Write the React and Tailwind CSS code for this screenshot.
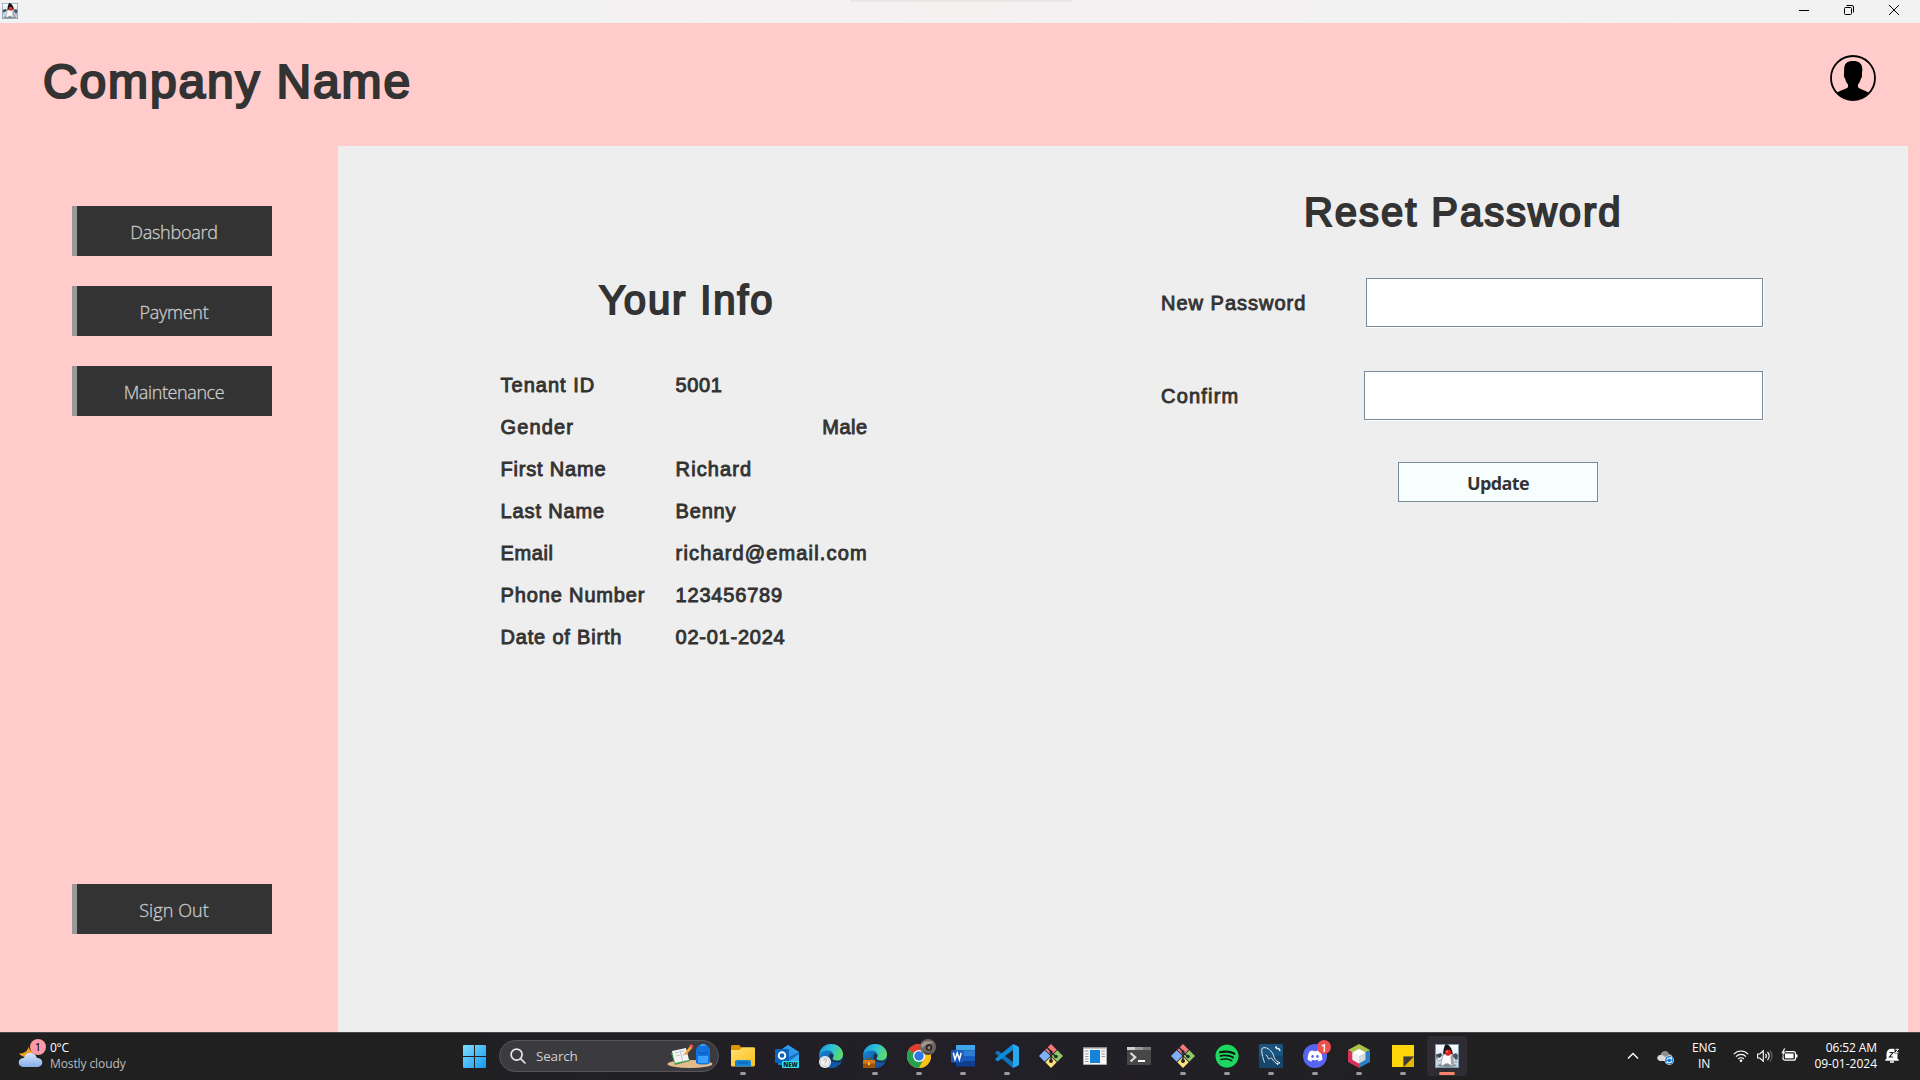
import React from "react";
import { FaDiscord, FaSpotify } from "react-icons/fa";

const ROUNDED = "font-['Liberation_Sans',sans-serif] text-[#333333]";

/* ---------- shared drawings ---------- */

function Duke({ className }) {
  return (
    <svg className={className} viewBox="0 0 24 24">
      <defs>
        <linearGradient id="dukeBg" x1="0" y1="0" x2="0" y2="1">
          <stop offset="0" stopColor="#ffffff" />
          <stop offset="1" stopColor="#b9d0e2" />
        </linearGradient>
      </defs>
      <rect x=".5" y=".5" width="23" height="23" fill="url(#dukeBg)" stroke="#8098ad" />
      <ellipse cx="12" cy="21.400" rx="9.500" ry="1.500" fill="#7d8890" />
      <path d="M1 10.500l5-1.500 1.500 3-1.500 3.500-4.500-1z" fill="#3d4a55" />
      <path d="M17 11l4-2 2 2-.5 4.500-4 .5z" fill="#48545f" />
      <path d="M2.500 12.500l2 1.500L9 9.500l-1 5-4 2.500-2-1.500zM16 11l4 3.500 1.500 4-2.500-.5-4-3z" fill="#eef1f4" stroke="#59636c" strokeWidth=".5" />
      <path d="M10 1c-1 2.500-2 6-1.800 10h9.600c0-4.500-2-8.500-5.300-10.500-1-.6-2-.4-2.500.5z" fill="#141517" />
      <path d="M8.500 10c-1 3.500-2.500 7-2.300 10.500.1 1.500 1.500 1.500 2.600.5 1.200-1.300 2.700-1.800 4.200-1.300 1.700.5 2.500 2.300 4.500 2 1.300-.3 1.500-4 .7-7.200-.3-1.700-.6-3-.9-4.500z" fill="#fafafa" stroke="#6c757d" strokeWidth=".5" />
      <path d="M15.500 11.500l1.800-.5c.8 3 1.300 6.500.8 10l-2-.6z" fill="#9aa2a9" />
      <circle cx="13" cy="8.600" r="3.100" fill="#e0201c" />
      <circle cx="12.200" cy="7.600" r=".9" fill="#ff8c84" />
    </svg>
  );
}

function Avatar() {
  return (
    <svg className="h-[46px] w-[46px]" viewBox="0 0 46 46">
      <defs>
        <clipPath id="avatarClip">
          <circle cx="23" cy="23" r="22" />
        </clipPath>
      </defs>
      <circle cx="23" cy="23" r="22" fill="none" stroke="#000" strokeWidth="1.800" />
      <path
        clipPath="url(#avatarClip)"
        d="M14.200 14c0-5.500 3-8 8.800-8s9.300 2.500 9.300 8c0 2-.2 3.300-.4 4.400.4 1.600.1 4.200-1 5.200-.5 2.600-1.500 4.400-2.900 5.900v2.800c2.500 2.200 6.500 2.600 10.500 5.300V46H7v-8.400c4-2.700 8-3.100 11-5.300v-2.800c-1.500-1.500-2.500-3.300-2.900-5.900-1.200-1-1.500-3.600-1-5.200-.2-1.100.1-2.400.1-4.400z"
        fill="#000"
      />
    </svg>
  );
}

/* ---------- taskbar icons ---------- */

function FolderIcon() {
  return (
    <svg className="h-6 w-6" viewBox="0 0 24 24">
      <defs>
        <linearGradient id="folder" x1="0" y1="0" x2="1" y2="1">
          <stop offset="0" stopColor="#ffdf70" />
          <stop offset="1" stopColor="#fbbf1c" />
        </linearGradient>
      </defs>
      <path d="M0 2.500C0 1.700.6 1 1.500 1H8l2.500 2.500V8H0z" fill="#d99605" />
      <path d="M0 6h8.500L11 3.200h11.500c.8 0 1.500.6 1.500 1.400V21c0 .9-.7 1.500-1.500 1.500h-21C.7 22.500 0 22 0 21z" fill="url(#folder)" />
      <path d="M4 22.500V18c0-1.200.8-2 2-2h12c1.200 0 2 .8 2 2v4.500z" fill="#1584d6" />
      <path d="M7.500 18.800h9" stroke="#0a5ea8" strokeWidth="1.300" strokeLinecap="round" />
    </svg>
  );
}

function OutlookIcon() {
  return (
    <span className="relative block h-6 w-6">
      <svg className="h-6 w-6" viewBox="0 0 24 24">
        <path d="M3 8l10-7 11 7v13H3z" fill="#1a7fd4" />
        <path d="M5 6.500L13 1l11 7-8 5-8-2z" fill="#2f9be6" />
        <path d="M14 13l10-5v13z" fill="#1b6cc0" />
        <path d="M24 10v11H9z" fill="#35aef0" />
        <rect y="5" width="14" height="14" rx="1" fill="#0a64bc" />
        <circle cx="7" cy="11.500" r="3.300" fill="none" stroke="#fff" strokeWidth="1.900" />
      </svg>
      <span className="absolute top-[17px] left-[7px] flex h-[7px] w-[17px] items-center justify-center rounded-[1px] bg-[#35e0ef] font-['Open_Sans',sans-serif] text-[6px] leading-none font-extrabold text-[#06222c]">
        NEW
      </span>
    </span>
  );
}

function EdgeIcon({ badge }) {
  return (
    <svg className="h-6 w-6" viewBox="0 0 24 24">
      <defs>
        <linearGradient id="edgeTop" x1="0" y1=".3" x2="1" y2=".6">
          <stop offset="0" stopColor="#1a9be0" />
          <stop offset=".5" stopColor="#2fc3d4" />
          <stop offset="1" stopColor="#62dd5c" />
        </linearGradient>
        <linearGradient id="edgeLow" x1="0" y1="0" x2="1" y2="1">
          <stop offset="0" stopColor="#1b8bd8" />
          <stop offset="1" stopColor="#0d4b97" />
        </linearGradient>
      </defs>
      <circle cx="12" cy="12" r="12" fill="url(#edgeLow)" />
      <path d="M.3 10C1.500 4 6.200 0 12 0c7.200 0 12 5 12 10.300 0 4-3 6.300-6.200 6.300-3 0-4.300-1.200-4.300-2.100 0-.8 1.100-1.200 1.100-3.200 0-2.800-2.700-4.800-6-4.800C4.500 6.500 1.500 8.500.3 10z" fill="url(#edgeTop)" />
      <path d="M9.500 12c-.8 5.500 3.800 8.900 12.700 6.300C20.500 21.500 17 24 12.500 24 8.500 22 6 17 9.500 12z" fill="#1257a5" />
      <path d="M10.500 10c-1.600 6 4 10.500 12.200 7.400l1.300-1.700c-1.500.8-3.500 1.300-6.200 1-3-.2-4.300-1.300-4.300-2.200 0-.8 1.100-1.200 1.100-3-.8-1.800-2.800-2.300-4.100-1.500z" fill="#221f28" opacity=".75" />
      {badge === "profile" ? (
        <g>
          <circle cx="6" cy="18" r="6" fill="#f1f1f1" />
          <circle cx="6" cy="18" r="4.600" fill="none" stroke="#bdbdbd" strokeWidth=".7" />
          <path d="M4.700 16.500c.2-2 3-1.800 2.700.1-.2 1-1.300 1-1.300 2.400M6 20.500v.8" fill="none" stroke="#999" strokeWidth=".9" />
        </g>
      ) : (
        <g>
          <path d="M4 16v-1.500h4V16" fill="none" stroke="#8a4b08" strokeWidth="1.200" />
          <rect y="16" width="12" height="8" rx=".8" fill="#d27a17" />
          <rect y="19.500" width="12" height="4.500" rx=".8" fill="#9b520b" />
          <rect x="5" y="18.500" width="2" height="2.500" fill="#ffc34d" />
        </g>
      )}
    </svg>
  );
}

function ChromeIcon() {
  return (
    <span className="relative block h-6 w-6">
      <svg className="h-6 w-6" viewBox="0 0 24 24">
        <circle cx="12" cy="12" r="12" fill="#fbc116" />
        <path d="M12 12L1.600 6A12 12 0 0 1 22.400 6z" fill="#e33b2e" />
        <path d="M12 12L1.600 6A12 12 0 0 0 12 24l5.200-9z" fill="#25a04b" />
        <path d="M12 6h10.400A12 12 0 0 1 12 24l5.200-9z" fill="#fbc116" />
        <circle cx="12" cy="12" r="6" fill="#fff" />
        <circle cx="12" cy="12" r="4.700" fill="#2f76e8" />
      </svg>
      <svg className="absolute -top-[5px] left-[13px] h-4 w-4" viewBox="0 0 16 16">
        <circle cx="8" cy="8" r="8" fill="#6f675f" />
        <path d="M1 6c4-5 10-4 13-2-4 0-8 1-12 5z" fill="#a19a91" />
        <circle cx="9" cy="8.500" r="3.200" fill="#26221f" />
        <path d="M7.500 8c1-1.500 3-1 3 .5s-1 2-1.500 2-2-1-1.500-2.500z" fill="#8f857c" />
        <path d="M2 11c3 3 8 4 11 1l-3 3.500H6z" fill="#4b443f" />
      </svg>
    </span>
  );
}

function WordIcon() {
  return (
    <svg className="h-6 w-6" viewBox="0 0 24 24">
      <rect x="5" y="1" width="19" height="5.500" fill="#41a5ee" />
      <rect x="5" y="6.500" width="19" height="5.500" fill="#2b7cd3" />
      <rect x="5" y="12" width="19" height="5.500" fill="#185abd" />
      <rect x="5" y="17.500" width="19" height="5" fill="#103f91" />
      <rect y="6" width="12.500" height="12.500" rx="1" fill="#1959bb" />
      <path d="M2.300 8.800l1.700 6.700 2.200-6.400 2.200 6.400 1.800-6.700" fill="none" stroke="#fff" strokeWidth="1.500" />
    </svg>
  );
}

function CodeIcon() {
  return (
    <svg className="h-6 w-6" viewBox="0 0 24 24">
      <path d="M.4 8.500L2 7c.4-.4 1-.4 1.500 0L18 18v6L.5 9.600c-.4-.3-.4-.8-.1-1.100z" fill="#0b74bd" />
      <path d="M.4 15.500L2 17c.4.400 1 .4 1.500 0L18 6V0L.5 14.400c-.4.300-.4.800-.1 1.100z" fill="#0d8ad8" />
      <path d="M18 0l5.200 2.400c.5.300.8.800.8 1.300v16.600c0 .5-.3 1-.8 1.300L18 24z" fill="#27a9f2" />
    </svg>
  );
}

function GitIcon() {
  return (
    <svg className="h-6 w-6" viewBox="0 0 24 24">
      <path d="M12 0l5.700 5.700L12 11.400 6.300 5.700z" fill="#f27a7a" />
      <path d="M0 12l5.700-5.700 5.700 5.700-5.700 5.700z" fill="#7fb0fa" />
      <path d="M24 12l-5.700-5.700-5.700 5.700 5.700 5.700z" fill="#8ccc66" />
      <path d="M12 24l5.700-5.700-5.700-5.700-5.700 5.700z" fill="#fbe27d" />
      <path d="M8 3.500l4 4v11M12 8.500l5 4" fill="none" stroke="#2b2730" strokeWidth="1.500" />
      <circle cx="12" cy="8" r="1.700" fill="#2b2730" />
      <circle cx="12" cy="17" r="2" fill="#2b2730" />
      <circle cx="17" cy="12.500" r="1.800" fill="#2b2730" />
    </svg>
  );
}

function WindowIcon() {
  return (
    <svg className="h-6 w-6" viewBox="0 0 24 24">
      <rect y="3" width="24" height="18" fill="#8c8c8c" />
      <rect x=".7" y="4.500" width="22.600" height="15.800" fill="#f7f7f7" />
      <rect x="7" y="6" width="10" height="13" fill="#1583d8" />
      <path d="M2 7h3.500M2 10h3.500M2 12.500h3.500M2 15h3.500M2 17.500h3.500M18.500 7H22M18.500 10H22M18.500 12.500H22" stroke="#8a8f94" strokeWidth=".9" />
    </svg>
  );
}

function TerminalIcon() {
  return (
    <svg className="h-6 w-6" viewBox="0 0 24 24">
      <rect y="3" width="24" height="18" rx=".8" fill="#474747" />
      <path d="M0 3h8v3H0z" fill="#d0d0d0" />
      <path d="M8 3h8v3H8z" fill="#9a9a9a" />
      <path d="M16 3h8v3h-8z" fill="#777" />
      <path d="M3.500 9l4.700 4.200-4.700 4.300" fill="none" stroke="#dcdcdc" strokeWidth="2.200" />
      <path d="M11 17h7" stroke="#fff" strokeWidth="2" />
    </svg>
  );
}

function SpotifyIcon() {
  return (
    <span className="block h-6 w-6 rounded-full bg-[#0b140d]">
      <FaSpotify className="h-6 w-6 text-[#1ed760]" />
    </span>
  );
}

function MysqlIcon() {
  return (
    <svg className="h-6 w-6" viewBox="0 0 24 24">
      <rect width="24" height="24" rx="1.500" fill="#1c5480" />
      <rect y="12" width="24" height="12" rx="1.500" fill="#17466c" />
      <path d="M5.500 18.500C4 14 1.500 6 3.500 4c3.500-1.500 8 1.500 10.500 6 1 2.500 1.500 5 3 6.500l4 2.500-3 .3 1 1.500-3.500-3c-2-1.500-2.500-4.500-4-4l-1.500 1.500c-1.500-1-1-3-3-4.500" fill="none" stroke="#dfe9f0" strokeWidth="1" />
      <path d="M16 3c.5 2 2 2.500 3.200 2.200L21 7.500l.6-1L20.300 4l-1.800.3L17.500 2z" fill="#fff" />
    </svg>
  );
}

function DiscordIcon() {
  return (
    <span className="relative block h-6 w-6">
      <span className="flex h-6 w-6 items-center justify-center rounded-full bg-[#5865f2]">
        <FaDiscord className="h-[16px] w-[16px] text-white" />
      </span>
      <span className="absolute -top-[4px] left-[14px] flex h-[14px] w-[14px] items-center justify-center rounded-full bg-[#ee4e52] font-['Open_Sans',sans-serif] text-[11px] leading-none font-semibold text-white">
        1
      </span>
    </span>
  );
}

function CubeIcon() {
  return (
    <svg className="h-6 w-6" viewBox="0 0 24 24">
      <path d="M12 0l11 6-11 6L1 6z" fill="#a9c24c" />
      <path d="M1 6l11 6v12L1 18z" fill="#d5335a" />
      <path d="M23 6l-11 6v12l11-6z" fill="#2d7fc4" />
      <path d="M12 5l6.500 3.500v7.300L12 19.500l-6.500-3.700V8.500z" fill="#d5dadd" />
      <path d="M12 5l6.500 3.500L12 12 5.500 8.500z" fill="#fff" />
      <path d="M5.500 8.500L12 12v7.500l-6.500-3.700z" fill="#f0f1f2" />
    </svg>
  );
}

function StickyIcon() {
  return (
    <svg className="h-6 w-6" viewBox="0 0 24 24">
      <path d="M1 1h22v11L12 23H1z" fill="#ffd60a" />
      <path d="M12 12h11v11H12z" fill="#e5b800" />
      <path d="M12.500 12.500H23L12.500 23z" fill="#3c3c3c" />
    </svg>
  );
}

const APPS = [
  { name: "File Explorer", icon: <FolderIcon />, open: true },
  { name: "Outlook", icon: <OutlookIcon /> },
  { name: "Edge profile", icon: <EdgeIcon badge="profile" /> },
  { name: "Edge work", icon: <EdgeIcon badge="work" />, open: true },
  { name: "Chrome", icon: <ChromeIcon />, open: true },
  { name: "Word", icon: <WordIcon />, open: true },
  { name: "Code", icon: <CodeIcon />, open: true },
  { name: "Git Bash", icon: <GitIcon /> },
  { name: "Window", icon: <WindowIcon /> },
  { name: "Terminal", icon: <TerminalIcon /> },
  { name: "Git GUI", icon: <GitIcon />, open: true },
  { name: "Spotify", icon: <SpotifyIcon />, open: true },
  { name: "MySQL", icon: <MysqlIcon />, open: true },
  { name: "Discord", icon: <DiscordIcon />, open: true },
  { name: "NetBeans", icon: <CubeIcon />, open: true },
  { name: "Sticky Notes", icon: <StickyIcon />, open: true },
  { name: "Java", icon: <Duke className="h-6 w-6" />, active: true },
];

function TaskApp({ app }) {
  return (
    <div className={app.active ? "flex h-10 w-10 flex-col items-center rounded bg-[#2f2d33] pt-2" : "flex h-10 w-10 flex-col items-center pt-2"}>
      {app.icon}
      {app.active && <span className="mt-1 h-[3px] w-4 rounded-full bg-[#f5866c]" />}
      {app.open && <span className="mt-1 h-[3px] w-1.5 rounded-full bg-[#9b9a9e]" />}
    </div>
  );
}

function SearchArt() {
  return (
    <svg className="h-6 w-[46px]" viewBox="0 0 46 24">
      <ellipse cx="23" cy="20" rx="22.500" ry="4" fill="#e3bd8c" />
      <path d="M4 9l14-4 5 12-15 4z" fill="#3f9b50" />
      <path d="M5 7l14-3 3 12-14 3z" fill="#f4f4f4" />
      <path d="M8 9l4-1M9 12l4-1M14.500 7.500l3-.7M15.500 11l3-.7M12.800 5.500l3 12" stroke="#b4b4b4" strokeWidth=".8" />
      <path d="M17 10l6-8 2.500 1.800L19 11z" fill="#f4a43a" />
      <path d="M22 2l2-2 2.500 2-1.500 2z" fill="#ef5350" />
      <path d="M29 19V7c0-9 14-9 14 0v12c-3 2-11 2-14 0z" fill="#1273de" />
      <path d="M33 2c1-3 5-3 6 0M31 12h10v7H31z" fill="#3aa0ff" />
      <path d="M31 8c3 2 7 2 10 0" fill="none" stroke="#0a4fae" />
    </svg>
  );
}

function Taskbar() {
  return (
    <footer className="flex h-12 items-center border-t border-[#47464a] bg-linear-to-r from-[#202020] from-20% via-[#221f28] via-50% to-[#202020] to-80% pb-px font-['Noto_Sans',sans-serif]">
      <div className="flex w-[463px] items-center pb-px pl-[18px]">
        <div className="relative h-7 w-[26px]">
          <svg className="mt-[2px] h-6 w-[26px]" viewBox="0 0 26 24">
            <defs>
              <linearGradient id="cloud" x1="0" y1="0" x2="0" y2="1">
                <stop offset="0" stopColor="#d8e6fb" />
                <stop offset="1" stopColor="#86aee8" />
              </linearGradient>
            </defs>
            <path d="M10 1c1.500 4-2.500 9-9 8.500C3 12 6 13.500 9 13l6-5C12 7 10.500 4 10 1z" fill="#f0a020" />
            <path d="M6 23c-7 0-7-9 0-9 1.500-7 11-7 13 0 7 0 7 9 0 9z" fill="url(#cloud)" />
          </svg>
          <span className="absolute -top-[3px] left-3 flex h-4 w-4 items-center justify-center rounded-full bg-[#ff99a4] text-[11px] leading-none text-black">
            1
          </span>
        </div>
        <div className="ml-[6px] font-['Open_Sans',sans-serif] text-[12px] leading-4">
          <div className="tracking-[-0.3px] text-white">0°C</div>
          <div className="tracking-[-0.1px] text-[#bdbdbd]">Mostly cloudy</div>
        </div>
      </div>

      <div className="flex items-center">
        <svg className="h-[23px] w-[23px]" viewBox="0 0 23 23">
          <defs>
            <linearGradient id="start" x1="0" y1="0" x2="1" y2="1">
              <stop offset="0" stopColor="#7fdcfc" />
              <stop offset="1" stopColor="#1499f2" />
            </linearGradient>
          </defs>
          <path d="M0 1q0-1 1-1h10v11H0zM12 0h10q1 0 1 1v10H12zM0 12h11v11H1q-1 0-1-1zM12 12h11v10q0 1-1 1H12z" fill="url(#start)" />
        </svg>
        <div className="ml-[13px] flex h-8 w-[220px] items-center rounded-full border border-[#56545a] bg-[#3b3a3e] pr-[5px] pl-[10px]">
          <svg className="h-4 w-4" viewBox="0 0 16 16" fill="none" stroke="#e6e6e6" strokeWidth="1.700" strokeLinecap="round">
            <circle cx="6.600" cy="6.600" r="5.500" />
            <path d="M10.800 10.800l4.200 4.200" />
          </svg>
          <span className="ml-[10px] flex-1 font-['Open_Sans',sans-serif] text-[13.500px] tracking-[-0.2px] text-[#cfcfcf]">Search</span>
          <SearchArt />
        </div>
        <div className="ml-1 flex gap-1">
          {APPS.map((app) => (
            <TaskApp key={app.name} app={app} />
          ))}
        </div>
      </div>

      <div className="ml-auto flex items-center pr-[20px] font-['Open_Sans',sans-serif] text-[12px] leading-4 text-white">
        <svg className="h-3 w-3" viewBox="0 0 12 12" fill="none" stroke="#fff" strokeWidth="1.400">
          <path d="M1 8.500l5-5 5 5" />
        </svg>
        <svg className="mt-[2px] ml-[18px] h-[15px] w-[17px]" viewBox="0 0 17 15">
          <path d="M4 11C-1 11-.5 5 3.500 5 4.500 0 11 0 12 4c3 0 4 3 3 5l-5 2z" fill="#8f8f8f" />
          <path d="M4 11C-1 11-.5 5 3.500 5c3-.5 4 2 7 3v3z" fill="#dadada" />
          <circle cx="12.300" cy="10.300" r="4.700" fill="#fff" />
          <circle cx="12.300" cy="10.300" r="4.200" fill="#1b78d0" />
          <path d="M9.800 9.800c.5-2 3-2.500 4.500-1V7.300M14.800 10.800c-.5 2-3 2.500-4.500 1v1.500" fill="none" stroke="#fff" strokeWidth="1.100" />
        </svg>
        <div className="ml-[18px] w-6 text-center tracking-[-0.1px]">
          <div>ENG</div>
          <div>IN</div>
        </div>
        <svg className="ml-[17px] h-[14px] w-4" viewBox="0 0 16 14" fill="none" stroke="#fff" strokeWidth="1.200">
          <path d="M.8 5.200c4-4.300 10.400-4.300 14.400 0M3 7.700c2.800-3 7.200-3 10 0M5.200 10c1.600-1.700 4-1.700 5.600 0" />
          <circle cx="8" cy="11.700" r="1.300" fill="#fff" stroke="none" />
        </svg>
        <svg className="ml-2 h-[14px] w-4" viewBox="0 0 16 14" fill="none" stroke="#fff" strokeWidth="1.100">
          <path d="M.6 5h2.200L6.300 1.800v10.400L2.800 9H.6zM8.500 4.800c1 1.200 1 3.200 0 4.400M10.500 3c2.200 2.200 2.200 5.800 0 8" />
          <path d="M12.800 1.300c3 3.200 3 8.200 0 11.400" stroke="#6b6b6b" />
        </svg>
        <svg className="mb-[2px] ml-2 h-[14px] w-[17px]" viewBox="0 0 17 14">
          <rect x="2" y="3.600" width="12.500" height="8.600" rx="2" fill="none" stroke="#fff" strokeWidth="1.200" />
          <rect x="4" y="5.500" width="8.500" height="4.800" fill="#fff" />
          <path d="M15 6.500h1.500v3H15z" fill="#fff" />
          <path d="M3 0L0 5.500h2L1 9l4-5H3.200L4.500 0z" fill="#fff" stroke="#202020" strokeWidth=".6" />
        </svg>
        <div className="ml-[14px] flex w-[65px] flex-col items-end pb-px whitespace-nowrap">
          <div className="tracking-[-0.1px]">06:52 AM</div>
          <div>09-01-2024</div>
        </div>
        <svg className="ml-[8px] h-4 w-[15px]" viewBox="0 0 15 16">
          <path d="M1.500 12V6.500C1.500 2 4 .8 7 .8c3.500 0 5.500 2 5.500 5.700V12z" fill="#fff" />
          <path d="M.3 12h13.400M5 14h4" stroke="#fff" strokeWidth="1.500" />
          <path d="M4.500 4.500H8L4.500 9H8" fill="none" stroke="#202020" strokeWidth="1.200" />
          <path d="M9.500.5h5v5h-5z" fill="#202020" />
          <path d="M10.500 1.300h3L10.500 4.700h3" fill="none" stroke="#fff" />
        </svg>
      </div>
    </footer>
  );
}

/* ---------- application ---------- */

function TitleBar() {
  return (
    <div className="relative flex h-[23px] items-center justify-between bg-linear-to-r from-[#f2f2f2] via-[#f4f1f1] to-[#f2f2f2] pr-[21px] pb-px pl-[2px]">
      <Duke className="h-4 w-4" />
      <div className="absolute top-0 left-[850px] h-[3px] w-[222px] bg-linear-to-b from-[#e6e2e2] to-transparent" />
      <div className="flex items-center gap-[35px] pb-[2px]">
        <svg className="h-[10px] w-[10px]" viewBox="0 0 10 10"><path d="M0 5.500h10" stroke="#000" /></svg>
        <svg className="h-[10px] w-[10px]" viewBox="0 0 10 10" fill="none" stroke="#000">
          <rect x=".5" y="2.500" width="7" height="7" rx="1" />
          <path d="M2.500.5H8q1.500 0 1.500 1.500v5.500" />
        </svg>
        <svg className="h-[10px] w-[10px]" viewBox="0 0 10 10"><path d="M0 0l10 10M10 0L0 10" stroke="#000" /></svg>
      </div>
    </div>
  );
}

function NavButton({ children, tracking }) {
  return (
    <button className="flex h-[50px] w-[200px] items-center justify-center border-l-[5px] border-[#999999] bg-[#333333] pt-[3px] pr-px font-['Open_Sans',sans-serif] text-[18px] font-light text-[#cccccc] [-webkit-text-stroke:0.3px_#cccccc]">
      <span className={tracking}>{children}</span>
    </button>
  );
}

const INFO = [
  ["Tenant ID", "tracking-[1px]", "5001", "tracking-[0.6px]"],
  ["Gender", "tracking-[1.100px]", "Male", "tracking-[0.5px]"],
  ["First Name", "tracking-[0.8px]", "Richard", "tracking-[1.1px]"],
  ["Last Name", "tracking-[0.85px]", "Benny", "tracking-[0.8px]"],
  ["Email", "tracking-[0.6px]", "richard@email.com", "tracking-[1.15px]"],
  ["Phone Number", "tracking-[0.85px]", "123456789", "tracking-[0.8px]"],
  ["Date of Birth", "tracking-[0.8px]", "02-01-2024", "tracking-[0.75px]"],
];

function Info() {
  return (
    <section className="w-[370px] pt-[130px]">
      <h2 className="pl-[99px] text-[40px] leading-[48px] tracking-[1.850px] [-webkit-text-stroke:1.900px_#333333]">Your Info</h2>
      <dl className="mt-[40px] ml-[0.6px] grid w-[367px] grid-cols-[175px_192px] text-[20px] leading-[42px] [-webkit-text-stroke:0.9px_#333333]">
        {INFO.map(([label, labelTracking, value, valueTracking]) => (
          <React.Fragment key={label}>
            <dt className={labelTracking}>{label}</dt>
            <dd className={label === "Gender" ? "text-right" : ""}>
              <span className={valueTracking}>{value}</span>
            </dd>
          </React.Fragment>
        ))}
      </dl>
    </section>
  );
}

const FIELD = "h-[49px] border border-[#7a8a99] bg-white shadow-[1px_1px_0_#ffffff] outline-none";

function ResetPassword() {
  return (
    <section className="w-[602px] pt-[42px]">
      <h2 className="pl-[143px] text-[40px] leading-[48px] tracking-[1.950px] whitespace-nowrap [-webkit-text-stroke:1.900px_#333333]">Reset Password</h2>
      <div className="mt-[42px] flex justify-between text-[20px]">
        <label className="pt-px leading-[48px] tracking-[1px] [-webkit-text-stroke:0.9px_#333333]">New Password</label>
        <input className={FIELD + " w-[397px]"} />
      </div>
      <div className="mt-[44px] flex justify-between text-[20px]">
        <label className="pt-px leading-[48px] tracking-[1.200px] [-webkit-text-stroke:0.9px_#333333]">Confirm</label>
        <input className={FIELD + " w-[399px]"} />
      </div>
      <button className="mt-[42px] ml-[237px] flex h-10 w-[200px] items-center justify-center border border-[#7a8a99] bg-[#f7fffe] pt-[3px] font-['Open_Sans',sans-serif] text-[18px] font-bold tracking-[-0.6px]">
        Update
      </button>
    </section>
  );
}

export default function App() {
  return (
    <div className={"flex h-[1080px] w-[1920px] flex-col overflow-hidden bg-[#ffcccb] " + ROUNDED}>
      <TitleBar />
      <header className="flex h-[123px] items-start justify-between pr-[44px] pl-[43px]">
        <h1 className="mt-[31px] text-[48px] leading-[56px] tracking-[1.850px] [-webkit-text-stroke:2.200px_#333333]">Company Name</h1>
        <div className="mt-[32px]"><Avatar /></div>
      </header>
      <div className="flex flex-1 pr-3">
        <nav className="flex w-[338px] flex-col gap-[30px] pt-[60px] pb-[98px] pl-[72px]">
          <NavButton tracking="tracking-[-0.25px]">Dashboard</NavButton>
          <NavButton tracking="tracking-[-0.25px]">Payment</NavButton>
          <NavButton tracking="tracking-[-0.4px]">Maintenance</NavButton>
          <div className="mt-auto">
            <NavButton tracking="tracking-[0.1px]">Sign Out</NavButton>
          </div>
        </nav>
        <main className="flex flex-1 justify-between bg-[#eeeeee] pr-[145px] pl-[162px]">
          <Info />
          <ResetPassword />
        </main>
      </div>
      <Taskbar />
    </div>
  );
}
